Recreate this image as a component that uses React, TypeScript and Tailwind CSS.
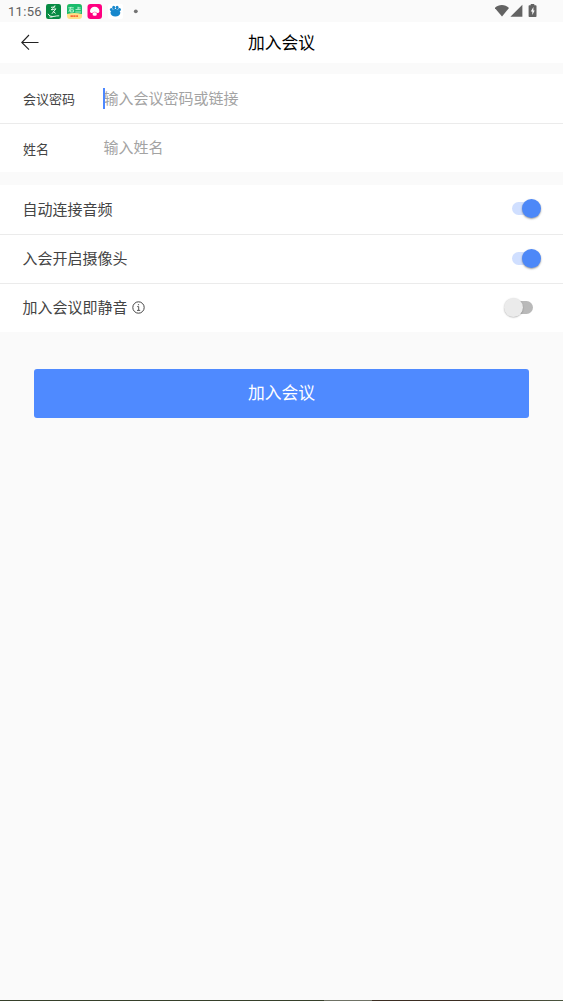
import React from 'react';

function StatusBar() {
  return (
    <div className="h-[22px] shrink-0 flex items-center justify-between pl-[8px] pr-[25px]">
      <div className="flex items-center">
        <span className="w-[38px] font-[Roboto,sans-serif] text-[13px] leading-[22px] pt-[2px] tracking-[0.3px] text-[#5f5f5f]">11:56</span>
        <svg className="mt-px" width="94" height="16" viewBox="46 4 94 16" fill="none">
          {/* Green note app */}
          <rect x="46" y="4" width="15" height="15" rx="2.2" fill="#078b43" />
          <path d="M51 7.4l4.2-.6M55 5.4c-1 2-2.3 3.6-4 4.4M51.5 9.8l4.4-1-4 5M52.8 11l2.8 2.4M48 13.8c1 2.2 3.4 3 6 2.6 2-.3 3.5-.8 5.2-.6M49.5 17h3" stroke="#e7f5eb" strokeWidth="1" />
          {/* Green and yellow app */}
          <rect x="67" y="4" width="15" height="15" rx="3" fill="#ffe087" />
          <path d="M67 7a3 3 0 0 1 3-3h9a3 3 0 0 1 3 3v7q-7.5-2-15 0z" fill="#19bb6b" />
          <path d="M68.4 7.8h5.4M71 6.8l-2.2 5M70.3 9.8h3.1v2.2h-3.1zM78 6.8v2.4M78 7.9h2.6M75.5 9.6h5.2M75.3 12h5.8" stroke="#d5fbe5" strokeWidth="0.8" />
          <path d="M70.5 16.2h2.4M73.3 16.2h2.3M76.2 16.2h1.8" stroke="#fb6637" strokeWidth="1.8" />
          {/* Pink mushroom app */}
          <rect x="87.5" y="4" width="14.5" height="15" rx="3" fill="#ff0080" />
          <path d="M90 11.2a4.7 4.4 0 0 1 9.4 0c0 1.6-1.3 2-2.7 1.7v2c0 1-4 1-4 0v-2c-1.4.3-2.7-.1-2.7-1.7z" fill="#fff" />
          <path d="M92.2 13l2.5-1 2.5 1" stroke="#ff4aa5" strokeWidth="0.6" />
          {/* Blue paw app */}
          <rect x="108" y="4" width="15" height="15" rx="2" fill="#fff" />
          <g fill="#1687cc">
            <ellipse cx="113.7" cy="7.6" rx="1.5" ry="1.8" />
            <ellipse cx="117.1" cy="7.6" rx="1.5" ry="1.8" />
            <ellipse cx="111.3" cy="9.6" rx="1.4" ry="1.6" />
            <ellipse cx="119.5" cy="9.6" rx="1.4" ry="1.6" />
            <path d="M115.4 9c1.6 0 4.9 1.5 4.9 3.8 0 2.2-2.2 3.8-4.9 3.8s-4.9-1.6-4.9-3.8c0-2.3 3.3-3.8 4.9-3.8z" />
          </g>
          <circle cx="135.8" cy="11.3" r="1.9" fill="#747474" />
        </svg>
      </div>
      <svg width="43" height="14" viewBox="495 4 43 14" fill="#636363">
        <path d="M494.8 8C498.6 4 505.2 4 509 8L502 16.6z" />
        <path d="M522.4 4.7v12h-12z" />
        <path fillRule="evenodd" d="M530.7 4h3.6v1.2h1.4q.8 0 .8.8v10.2q0 .8-.8.8h-6.3q-.8 0-.8-.8V6q0-.8.8-.8h1.3zM533.4 7l-2.6 4.6h1.5v3.3l2.4-4.5h-1.3z" />
      </svg>
    </div>
  );
}

function Header() {
  return (
    <header className="h-[41px] shrink-0 bg-white grid grid-cols-[60px_1fr_60px] items-center pb-[2px]">
      <svg className="ml-5" width="20" height="18" viewBox="20 33 20 18" fill="none" stroke="#222" strokeWidth="1.1">
        <path d="M38.5 42.5H21.8M29 35L21.8 42.5l7.2 7.2" />
      </svg>
      <h1 className="text-center text-[16.8px] leading-[24px] pt-px text-black">加入会议</h1>
    </header>
  );
}

interface FieldProps {
  label: string;
  placeholder: string;
  focused?: boolean;
}

function Field({ label, placeholder, focused }: FieldProps) {
  return (
    <div className="flex items-center h-full pl-[23px]">
      <span className="w-[80px] text-[13px] leading-[20px] pt-px text-[#444]">{label}</span>
      <div className="relative pl-[0.4px] text-[15px] leading-[20px] pb-[2px] text-[#a3a3a3]">
        {focused && <span className="absolute left-0 top-0 w-[2px] h-[21px] bg-[#4d88ff]" />}
        {placeholder}
      </div>
    </div>
  );
}

interface SettingProps {
  label: string;
  on?: boolean;
  info?: boolean;
}

function Setting({ label, on, info }: SettingProps) {
  return (
    <div className="h-full flex items-center justify-between pl-[22.5px] pr-[22px] pb-[2px]">
      <span className="flex items-center gap-[4px] text-[15px] leading-[22px] text-[#444]">
        {label}
        {info && (
          <svg width="13" height="13" viewBox="0 0 13 13" fill="none" stroke="#444" strokeWidth="1">
            <circle cx="6.5" cy="6.5" r="5.7" />
            <path d="M5.2 5.6h1.5v3.6M5 9.4h3.2M5.9 3.7h1.2" strokeWidth="0.9" />
          </svg>
        )}
      </span>
      {on ? (
        <span className="flex items-center justify-end w-[30px] h-5">
          <span className="w-[21px] h-[13px] -mr-[11px] rounded-l-full bg-[#d0dfff]" />
          <span className="relative w-[19px] h-[19px] rounded-full bg-[#4d88f8] shadow-[0_1px_2px_rgba(0,0,0,0.4)]" />
        </span>
      ) : (
        <span className="flex items-center w-[37px] h-5">
          <span className="relative w-[19px] h-[19px] shrink-0 rounded-full bg-[#ebebeb] shadow-[0_0.5px_1.5px_rgba(0,0,0,0.3)]" />
          <span className="w-[20px] h-[13px] -ml-[10px] rounded-r-full bg-[#b9b9b9]" />
        </span>
      )}
    </div>
  );
}

export default function App() {
  return (
    <div className="w-full h-[1001px] flex flex-col overflow-hidden bg-[#fafafa] font-['Noto_Sans_CJK_SC',sans-serif]">
      <StatusBar />
      <Header />

      {/* Meeting details */}
      <section className="mt-[11px] h-[98px] shrink-0 grid grid-rows-[49px_1px_48px] bg-white">
        <Field label="会议密码" placeholder="输入会议密码或链接" focused />
        <div className="bg-[#ebebeb]" />
        <Field label="姓名" placeholder="输入姓名" />
      </section>

      {/* Audio and camera options */}
      <section className="mt-[13px] h-[147px] shrink-0 grid grid-rows-[49px_1px_48px_1px_48px] bg-white">
        <Setting label="自动连接音频" on />
        <div className="bg-[#ebebeb]" />
        <Setting label="入会开启摄像头" on />
        <div className="bg-[#ebebeb]" />
        <Setting label="加入会议即静音" info />
      </section>

      <button className="mt-[37px] mx-[34px] h-[49px] pb-[2px] shrink-0 rounded-[3px] bg-[#4f8aff] text-[16.8px] text-white">
        加入会议
      </button>

      {/* Edge of the system navigation bar */}
      <div className="mt-auto h-px shrink-0 flex">
        <div className="w-[324px] bg-[#36402a]" />
        <div className="w-[48px] bg-[#6f7265]" />
        <div className="flex-1 bg-linear-to-r from-[#3b2d22] via-[#3b2d22] to-[#4b5640]" />
      </div>
    </div>
  );
}
